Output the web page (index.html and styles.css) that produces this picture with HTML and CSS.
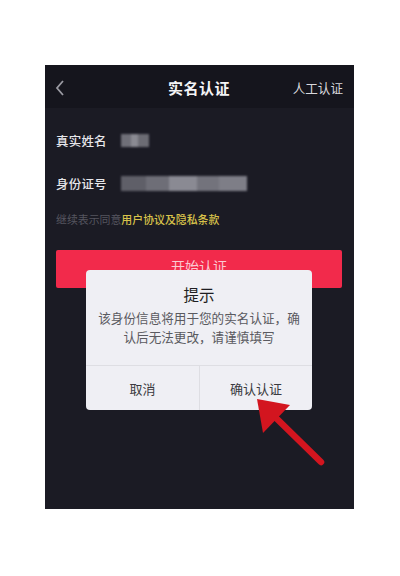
FILE: index.html
```html
<!DOCTYPE html>
<html lang="zh">
<head>
<meta charset="utf-8">
<link rel="stylesheet" href="styles.css">
</head>
<body>
<div class="phone">
  <div class="header">
    <div class="back">
      <svg width="10" height="16" viewBox="0 0 10 16"><polyline points="8,1 2,8 8,15" fill="none" stroke="#9a9aa2" stroke-width="1.8"/></svg>
    </div>
    <div class="title">实名认证</div>
    <div class="manual">人工认证</div>
  </div>
  <div class="content">
    <div class="row">
      <span class="label">真实姓名</span>
      <span class="blur blur-name"></span>
    </div>
    <div class="row row-id">
      <span class="label">身份证号</span>
      <span class="blur blur-id"></span>
    </div>
    <div class="agree"><span class="agree-gray">继续表示同意</span><span class="agree-link">用户协议及隐私条款</span></div>
    <div class="start-btn">开始认证</div>
  </div>
  <div class="dialog">
    <div class="dlg-title">提示</div>
    <div class="dlg-body">该身份信息将用于您的实名认证，确认后无法更改，请谨慎填写</div>
    <div class="dlg-actions">
      <div class="dlg-btn">取消</div>
      <div class="dlg-btn dlg-confirm">确认认证</div>
    </div>
  </div>
  <svg class="arrow" width="309" height="444" viewBox="0 0 309 444">
    <line x1="229" y1="351" x2="276" y2="397" stroke="#d3151f" stroke-width="6.5" stroke-linecap="round"/>
    <polygon points="212,334 245,340 218,368" fill="#d3151f"/>
  </svg>
</div>
</body>
</html>
```
FILE: styles.css
```css
html, body {
  margin: 0;
  padding: 0;
  background: #ffffff;
}
body {
  width: 400px;
  height: 576px;
  font-family: "Noto Sans CJK SC", "Noto Sans", sans-serif;
  padding-top: 65px;
  box-sizing: border-box;
}
.phone {
  position: relative;
  margin-left: 45px;
  width: 309px;
  height: 444px;
  background: #1b1b24;
  overflow: hidden;
}
.header {
  height: 43px;
  background: #15151d;
  display: grid;
  grid-template-columns: 1fr auto 1fr;
  align-items: center;
  padding: 2px 11px 0 10px;
  box-sizing: border-box;
}
.back {
  display: flex;
  align-items: center;
}
.title {
  color: #f4f4f6;
  font-size: 15px;
  font-weight: bold;
  letter-spacing: 0.5px;
}
.manual {
  justify-self: end;
  color: #d8d8dc;
  font-size: 12.6px;
}
.content {
  padding: 20px 12px 0 11px;
  display: flex;
  flex-direction: column;
}
.row {
  height: 24px;
  display: flex;
  align-items: center;
  gap: 14px;
}
.row-id {
  margin-top: 19px;
}
.label {
  color: #e6e6ea;
  font-size: 12.5px;
  font-weight: 500;
  letter-spacing: 0.2px;
}
.blur {
  display: block;
  height: 13px;
  filter: blur(1px);
}
.blur-name {
  width: 28px;
  background: linear-gradient(90deg, #6f6f78 0 35%, #8a8a92 35% 60%, #6c6c74 60% 100%);
}
.blur-id {
  width: 126px;
  height: 15px;
  background: linear-gradient(90deg, #5f5f68 0 20%, #6e6e77 20% 38%, #8a8a93 38% 60%, #73737c 60% 78%, #7e7e87 78% 100%);
}
.agree {
  margin-top: 16px;
  height: 16px;
  line-height: 16px;
  font-size: 10.9px;
  white-space: nowrap;
}
.agree-gray {
  color: #55555f;
}
.agree-link {
  color: #d8c24a;
  font-weight: 500;
}
.start-btn {
  margin-top: 23px;
  height: 38px;
  background: #f22a4b;
  border-radius: 2px;
  color: rgba(255, 255, 255, 0.75);
  font-size: 14px;
  text-align: center;
  line-height: 32px;
}
.dialog {
  position: absolute;
  left: 41px;
  top: 205px;
  width: 226px;
  height: 140px;
  background: #efeff4;
  border-radius: 4px;
  display: flex;
  flex-direction: column;
  overflow: hidden;
}
.dlg-title {
  margin-top: 14px;
  height: 20px;
  line-height: 20px;
  text-align: center;
  font-size: 15.5px;
  color: #1e1e22;
}
.dlg-body {
  margin: 4px auto 0;
  width: 202px;
  font-size: 12.6px;
  line-height: 19px;
  color: #5a5a60;
  text-align: center;
  height: 57px;
}
.dlg-actions {
  flex: 1;
  display: grid;
  grid-template-columns: 1fr 1fr;
  border-top: 1px solid #dedee3;
}
.dlg-btn {
  display: flex;
  align-items: center;
  justify-content: center;
  font-size: 13px;
  color: #3a3a40;
}
.dlg-confirm {
  border-left: 1px solid #dedee3;
}
.arrow {
  position: absolute;
  left: 0;
  top: 0;
}
```
